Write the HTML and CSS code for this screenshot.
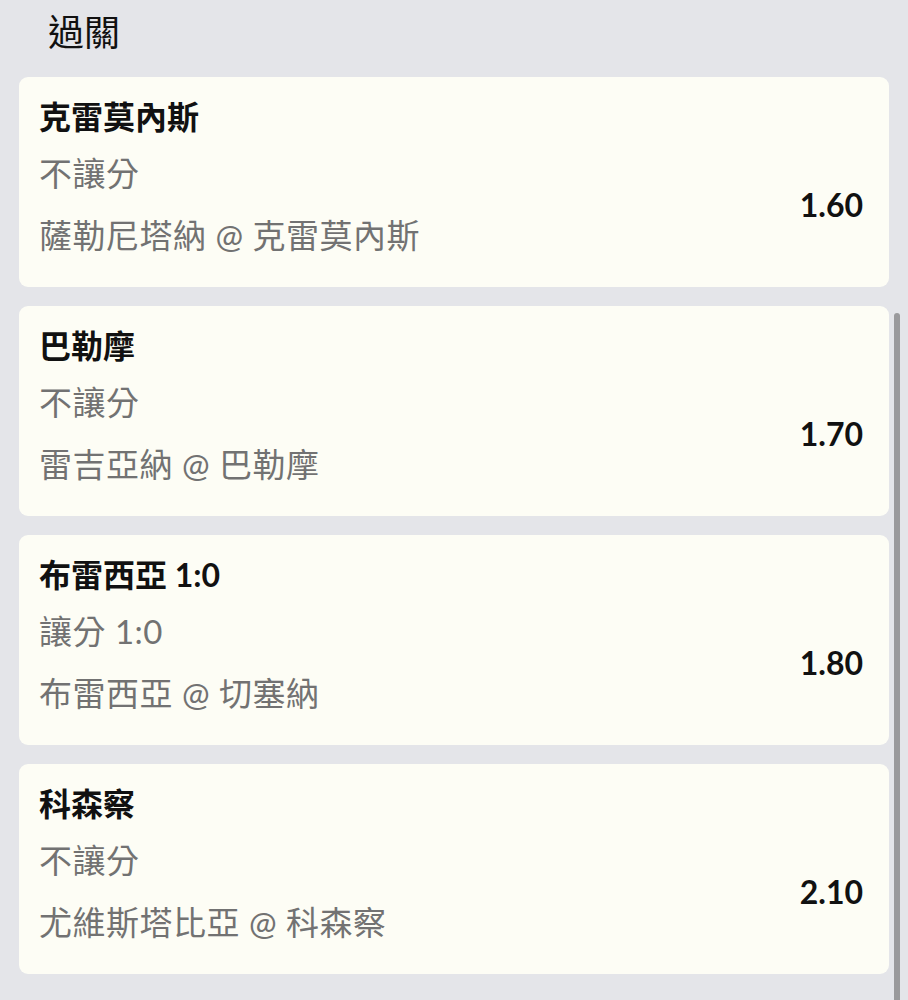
FILE: index.html
```html
<!DOCTYPE html>
<html lang="zh-Hant">
<head>
  <meta charset="UTF-8">
  <meta name="viewport" content="width=device-width, initial-scale=1.0">
  <title>過關</title>
  <link rel="stylesheet" href="styles.css">
</head>
<body>
  <h1 class="page-title">過關</h1>

  <div class="bet-list">
    <div class="bet-card">
      <div class="bet-info">
        <div class="bet-pick">克雷莫內斯</div>
        <div class="bet-type">不讓分</div>
        <div class="bet-match">薩勒尼塔納 @ 克雷莫內斯</div>
      </div>
      <div class="bet-odds">1.60</div>
    </div>

    <div class="bet-card">
      <div class="bet-info">
        <div class="bet-pick">巴勒摩</div>
        <div class="bet-type">不讓分</div>
        <div class="bet-match">雷吉亞納 @ 巴勒摩</div>
      </div>
      <div class="bet-odds">1.70</div>
    </div>

    <div class="bet-card">
      <div class="bet-info">
        <div class="bet-pick">布雷西亞 1:0</div>
        <div class="bet-type">讓分 1:0</div>
        <div class="bet-match">布雷西亞 @ 切塞納</div>
      </div>
      <div class="bet-odds">1.80</div>
    </div>

    <div class="bet-card">
      <div class="bet-info">
        <div class="bet-pick">科森察</div>
        <div class="bet-type">不讓分</div>
        <div class="bet-match">尤維斯塔比亞 @ 科森察</div>
      </div>
      <div class="bet-odds">2.10</div>
    </div>
  </div>

  <div class="scroll-thumb"></div>
</body>
</html>
```

FILE: styles.css
```css
body {
  margin: 0;
  background-color: #e4e5e9;
  font-family: Lato, "Noto Sans CJK TC", sans-serif;
  color: #111;
  overflow: hidden;
}
.page-title {
  margin: 0;
  padding: 9px 48px 0;
  font-size: 36px;
  font-weight: 400;
  line-height: 46px;
  height: 67px;
  box-sizing: border-box;
}
.bet-list {
  display: flex;
  flex-direction: column;
  gap: 19px;
  padding: 10px 19px 0;
}
.bet-card {
  display: flex;
  align-items: center;
  justify-content: space-between;
  height: 210px;
  box-sizing: border-box;
  padding: 16px 26px 20px 20px;
  background-color: #fdfdf5;
  border-radius: 9px;
}
.bet-info {
  display: flex;
  flex-direction: column;
  align-self: flex-start;
}
.bet-pick {
  font-size: 32px;
  font-weight: 700;
  line-height: 48px;
}
.bet-type, .bet-match {
  font-size: 33px;
  line-height: 48px;
  letter-spacing: 0.5px;
  color: #727272;
}
.bet-type {
  margin-top: 8px;
}
.bet-match {
  margin-top: 14px;
}
.bet-odds {
  font-size: 32px;
  font-weight: 700;
  padding-top: 48px;
}
.scroll-thumb {
  position: absolute;
  top: 313px;
  left: 894px;
  width: 6px;
  height: 700px;
  border-radius: 3px;
  background-color: #9a9a9c;
}
```
